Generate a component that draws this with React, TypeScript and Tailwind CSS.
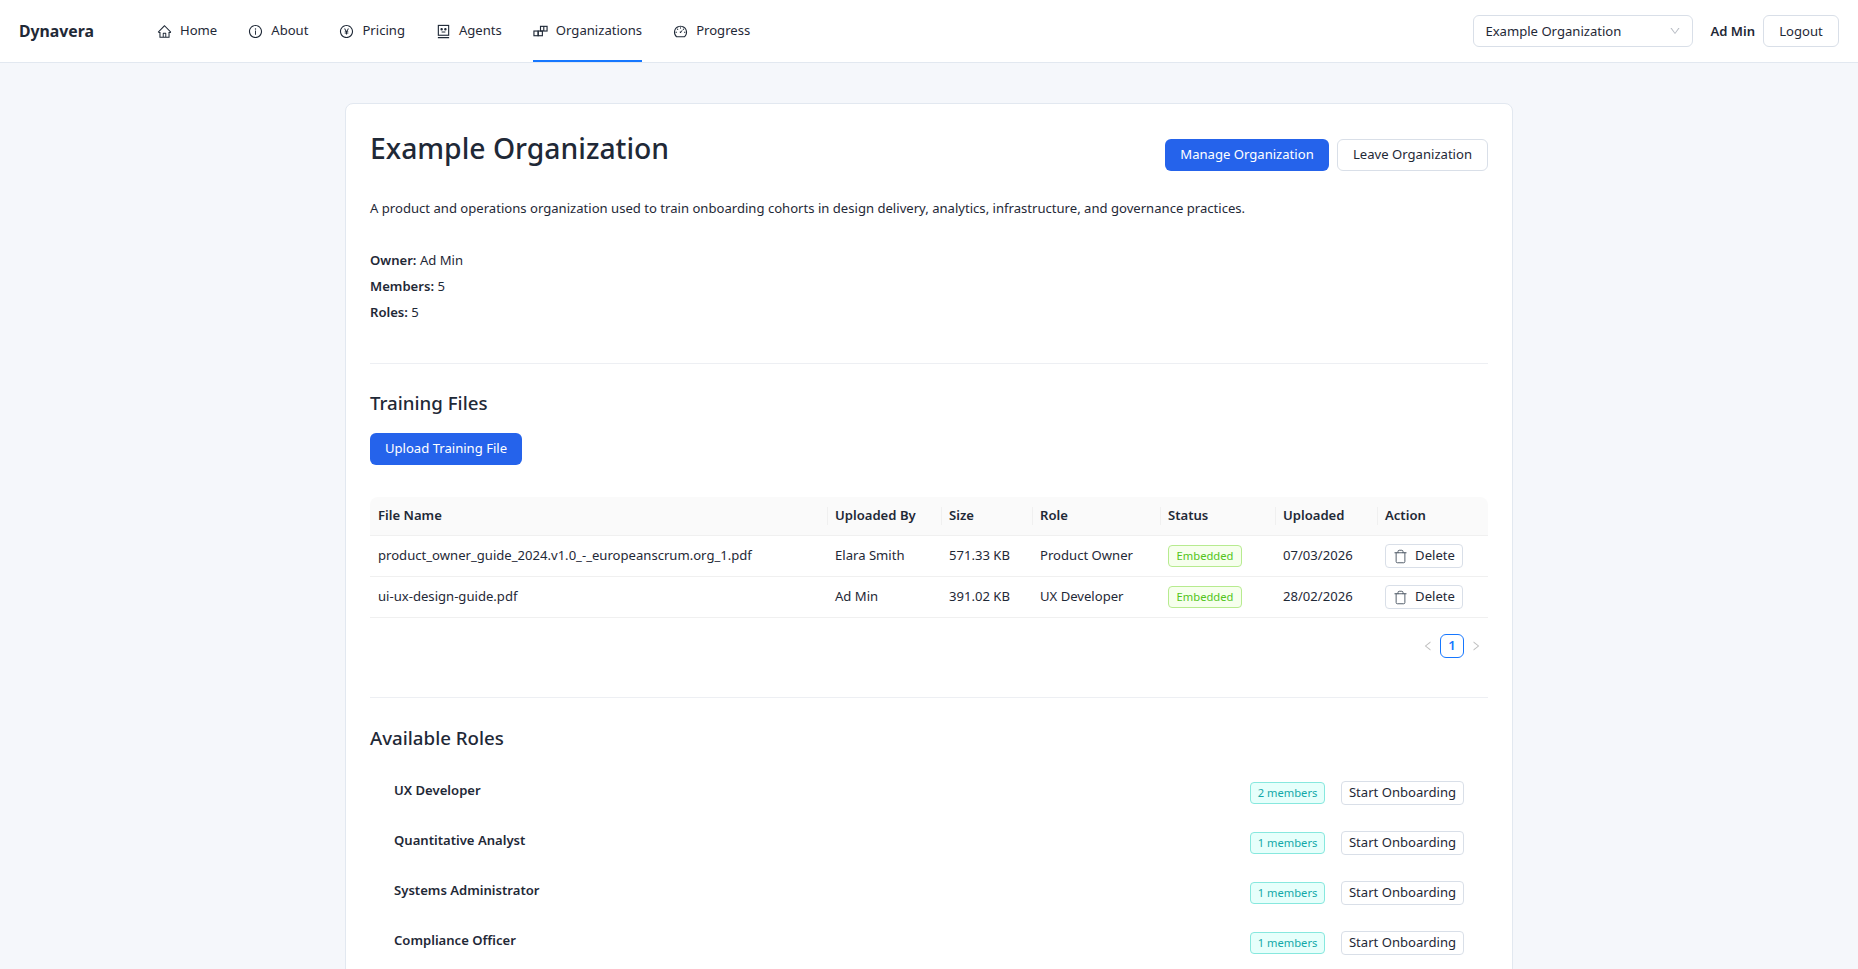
import { AiOutlineDashboard, AiOutlineHome, AiOutlineInfoCircle, AiOutlineLeft, AiOutlinePayCircle, AiOutlineRight, AiOutlineDown } from 'react-icons/ai';
import { Trash } from 'lucide-react';

const font = 'font-["Noto_Sans",sans-serif]';

function AgentIcon() {
  return (
    <svg viewBox="0 0 16 16" className="w-[15px] h-[15px]" fill="none" stroke="currentColor" strokeWidth="1.2">
      <rect x="2.5" y="1.5" width="11" height="10.5" />
      <circle cx="6" cy="5.5" r="0.7" fill="currentColor" />
      <circle cx="10" cy="5.5" r="0.7" fill="currentColor" />
      <path d="M6 8.5h4M2 14.5h12" />
    </svg>
  );
}

function OrgIcon() {
  return (
    <svg viewBox="0 0 16 16" className="w-[15px] h-[15px]" fill="none" stroke="currentColor" strokeWidth="1.2">
      <rect x="1" y="7.5" width="4.5" height="5" />
      <rect x="5.5" y="7.5" width="4.5" height="5" />
      <rect x="8" y="2.5" width="7" height="5" />
      <path d="M11.5 2.5v5" />
    </svg>
  );
}

const nav = [
  { label: 'Home', icon: <AiOutlineHome size={15} /> },
  { label: 'About', icon: <AiOutlineInfoCircle size={15} /> },
  { label: 'Pricing', icon: <AiOutlinePayCircle size={15} /> },
  { label: 'Agents', icon: <AgentIcon /> },
  { label: 'Organizations', icon: <OrgIcon />, active: true },
  { label: 'Progress', icon: <AiOutlineDashboard size={15} /> },
];

const files = [
  { name: 'product_owner_guide_2024.v1.0_-_europeanscrum.org_1.pdf', by: 'Elara Smith', size: '571.33 KB', role: 'Product Owner', date: '07/03/2026' },
  { name: 'ui-ux-design-guide.pdf', by: 'Ad Min', size: '391.02 KB', role: 'UX Developer', date: '28/02/2026' },
];

const roles = [
  { name: 'UX Developer', members: 2 },
  { name: 'Quantitative Analyst', members: 1 },
  { name: 'Systems Administrator', members: 1 },
  { name: 'Compliance Officer', members: 1 },
];

const cols = [
  { label: 'File Name', w: 'w-[457px]' },
  { label: 'Uploaded By', w: 'w-[114px]' },
  { label: 'Size', w: 'w-[91px]' },
  { label: 'Role', w: 'w-[128px]' },
  { label: 'Status', w: 'w-[115px]' },
  { label: 'Uploaded', w: 'w-[102px]' },
  { label: 'Action', w: 'w-[111px]' },
];

export default function App() {
  return (
    <div className={`h-screen overflow-hidden bg-[#f5f7fb] text-[13.1px] text-[#1f2937] ${font}`}>
      {/* Top bar */}
      <header className="h-[63px] bg-white border-b border-[#e2e8f0] flex items-center pl-[19px] pr-[19px]">
        <div className="w-[138px] pt-[2px] text-[15.8px] font-bold">Dynavera</div>
        <nav className="flex h-full gap-[31px]">
          {nav.map((n) => (
            <div key={n.label} className={`flex items-center gap-2 h-full pt-[2px] border-b-2 ${n.active ? 'border-[#1677ff]' : 'border-transparent'}`}>
              {n.icon}
              <span>{n.label}</span>
            </div>
          ))}
        </nav>
        <div className="ml-auto flex items-center">
          <div className="w-[220px] h-8 rounded-md border border-[#d9dfe8] flex items-center justify-between pl-[11px] pr-[11px]">
            <span className="pt-px">Example Organization</span>
            <AiOutlineDown size={12} className="text-[#b8bcc4]" />
          </div>
          <span className="ml-[17px] pt-px font-semibold">Ad Min</span>
          <button className="ml-2 w-[76px] h-8 pt-px rounded-md border border-[#d9dfe8] bg-white">Logout</button>
        </div>
      </header>

      {/* Card */}
      <main className="w-[1168px] ml-[345px] mt-10 bg-white border border-[#e2e8f0] rounded-lg p-6 pb-20">
        <div className="flex justify-between items-start">
          <h1 className="text-[28.3px] leading-[38px] pt-px font-[550]">Example Organization</h1>
          <div className="flex gap-2 mt-[11px]">
            <button className="h-8 w-[164px] rounded-md bg-[#2563eb] text-white">Manage Organization</button>
            <button className="h-8 w-[151px] rounded-md border border-[#d9dfe8] bg-white">Leave Organization</button>
          </div>
        </div>

        <p className="mt-[26px] leading-[22px]">
          A product and operations organization used to train onboarding cohorts in design delivery, analytics, infrastructure, and governance practices.
        </p>

        <div className="mt-[30px] flex flex-col gap-1 leading-[22px]">
          <div><span className="font-semibold">Owner:</span> Ad Min</div>
          <div><span className="font-semibold">Members:</span> 5</div>
          <div><span className="font-semibold">Roles:</span> 5</div>
        </div>

        <div className="mt-[40px] border-t border-[#edeff3]" />

        <h2 className="mt-[25px] text-[18.7px] leading-[28px] font-[550]">Training Files</h2>
        <button className="mt-[16px] h-8 w-[152px] rounded-md bg-[#2563eb] text-white">Upload Training File</button>

        {/* Files table */}
        <div className="mt-8">
          <div className="flex h-[39px] bg-[#fafafa] rounded-t-lg border-b border-[#f0f0f0] font-semibold">
            {cols.map((c, i) => (
              <div key={c.label} className={`${c.w} relative flex items-center px-2`}>
                {i > 0 && <span className="absolute left-0 top-[10px] h-[18px] w-px bg-[#f0f0f0]" />}
                {c.label}
              </div>
            ))}
          </div>
          {files.map((f) => (
            <div key={f.name} className="flex h-[41px] border-b border-[#f0f0f0] items-center">
              <div className="w-[457px] px-2">{f.name}</div>
              <div className="w-[114px] px-2">{f.by}</div>
              <div className="w-[91px] px-2">{f.size}</div>
              <div className="w-[128px] px-2">{f.role}</div>
              <div className="w-[115px] px-2">
                <span className="inline-flex items-center justify-center h-[22px] w-[74px] rounded border border-[#b7eb8f] bg-[#f6ffed] text-[#52c41a] text-[11.2px]">Embedded</span>
              </div>
              <div className="w-[102px] px-2">{f.date}</div>
              <div className="w-[111px] px-2">
                <button className="h-6 w-[78px] rounded border border-[#d9dfe8] bg-white flex items-center justify-center gap-[7px]">
                  <Trash size={15} strokeWidth={1.5} className="text-[#4b5563]" />
                  Delete
                </button>
              </div>
            </div>
          ))}
          <div className="flex justify-end items-center mt-4 pr-[6px] gap-[6px] text-[#bfbfbf]">
            <AiOutlineLeft size={12} />
            <span className="w-6 h-6 rounded-md border border-[#1677ff] text-[#1677ff] font-semibold flex items-center justify-center">1</span>
            <AiOutlineRight size={12} />
          </div>
        </div>

        <div className="mt-[39px] border-t border-[#edeff3]" />

        <h2 className="mt-[26px] text-[18.7px] leading-[28px] font-[550]">Available Roles</h2>
        <div className="mt-[16px] flex flex-col">
          {roles.map((r) => (
            <div key={r.name} className="h-[50px] flex items-center justify-between px-6">
              <span className="font-semibold -mt-1">{r.name}</span>
              <div className="flex items-center gap-4">
                <span className="inline-flex items-center justify-center h-[22px] w-[75px] rounded border border-[#87e8de] bg-[#e6fffb] text-[#13a8a8] text-[11.2px]">{r.members} members</span>
                <button className="h-6 w-[123px] rounded border border-[#d9dfe8] bg-white">Start Onboarding</button>
              </div>
            </div>
          ))}
        </div>
      </main>
    </div>
  );
}
